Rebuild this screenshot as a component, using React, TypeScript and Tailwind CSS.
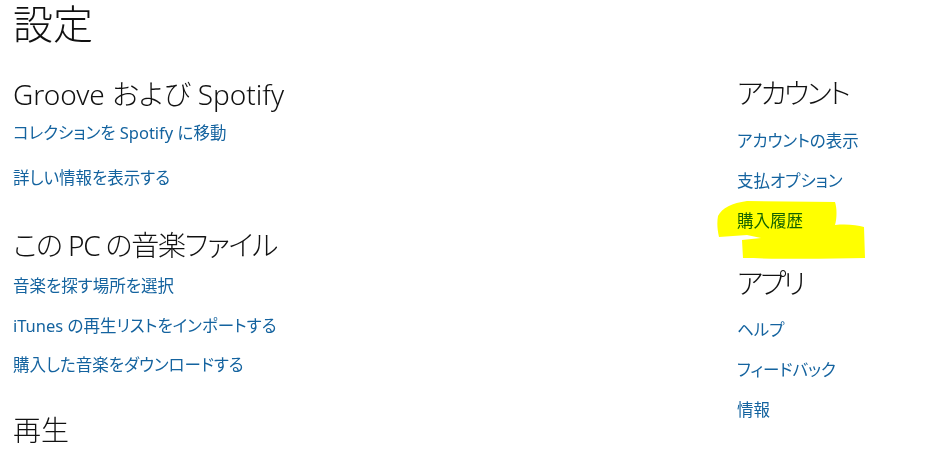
import React from "react";

const font =
  "font-['Noto_Sans','Noto_Sans_CJK_JP',sans-serif] [font-feature-settings:'palt']";

function SectionTitle({ children, className = "" }: { children: React.ReactNode; className?: string }) {
  return (
    <h2 className={`text-[28px] leading-[36px] font-light text-[#111] ${className}`}>
      {children}
    </h2>
  );
}

function LinkItem({ children, className = "" }: { children: React.ReactNode; className?: string }) {
  return (
    <a href="#" className={`block w-fit text-[16.5px] leading-[24px] text-[#14639f] ${className}`}>
      {children}
    </a>
  );
}

function Highlight() {
  return (
    <svg
      className="absolute left-[-20px] top-[-11px] mix-blend-multiply pointer-events-none"
      width="150"
      height="64"
      viewBox="0 0 150 64"
    >
      <path
        d="M1 18 C5 10 15 5 30 3 L118 4 C120 10 120 20 118 27 C130 26 140 27 147 29 L148 60 C110 61 60 61 26 60 L25 42 L44 40 L30 37 L2 39 C0 30 0 24 1 18 Z"
        fill="#ffff00"
      />
    </svg>
  );
}

export default function App() {
  return (
    <div className={`w-[936px] h-[467px] bg-white overflow-hidden flex px-[13px] ${font}`}>
      <div className="flex-1 flex flex-col">
        <h1 className="text-[40px] leading-[48px] font-light text-[#111]">設定</h1>

        <SectionTitle className="mt-[28px]">Groove および Spotify</SectionTitle>
        <LinkItem className="mt-[9px]">コレクションを Spotify に移動</LinkItem>
        <LinkItem className="mt-[21px]">詳しい情報を表示する</LinkItem>

        <SectionTitle className="mt-[37px] tracking-[-1.2px]">この PC の音楽ファイル</SectionTitle>
        <LinkItem className="mt-[11px]">音楽を探す場所を選択</LinkItem>
        <LinkItem className="mt-[16px]">iTunes の再生リストをインポートする</LinkItem>
        <LinkItem className="mt-[15px]">購入した音楽をダウンロードする</LinkItem>

        <SectionTitle className="mt-[35px]">再生</SectionTitle>
      </div>

      <div className="w-[186px] flex flex-col pt-[75px]">
        <SectionTitle className="tracking-[-2.5px]">アカウント</SectionTitle>
        <div className="mt-[18px] flex flex-col gap-[16px]">
          <LinkItem>アカウントの表示</LinkItem>
          <LinkItem>支払オプション</LinkItem>
          <div className="relative">
            <LinkItem>購入履歴</LinkItem>
            <Highlight />
          </div>
        </div>

        <SectionTitle className="mt-[32px] tracking-[-3px]">アプリ</SectionTitle>
        <div className="mt-[17px] flex flex-col gap-[16px]">
          <LinkItem>ヘルプ</LinkItem>
          <LinkItem>フィードバック</LinkItem>
          <LinkItem>情報</LinkItem>
        </div>
      </div>
    </div>
  );
}
